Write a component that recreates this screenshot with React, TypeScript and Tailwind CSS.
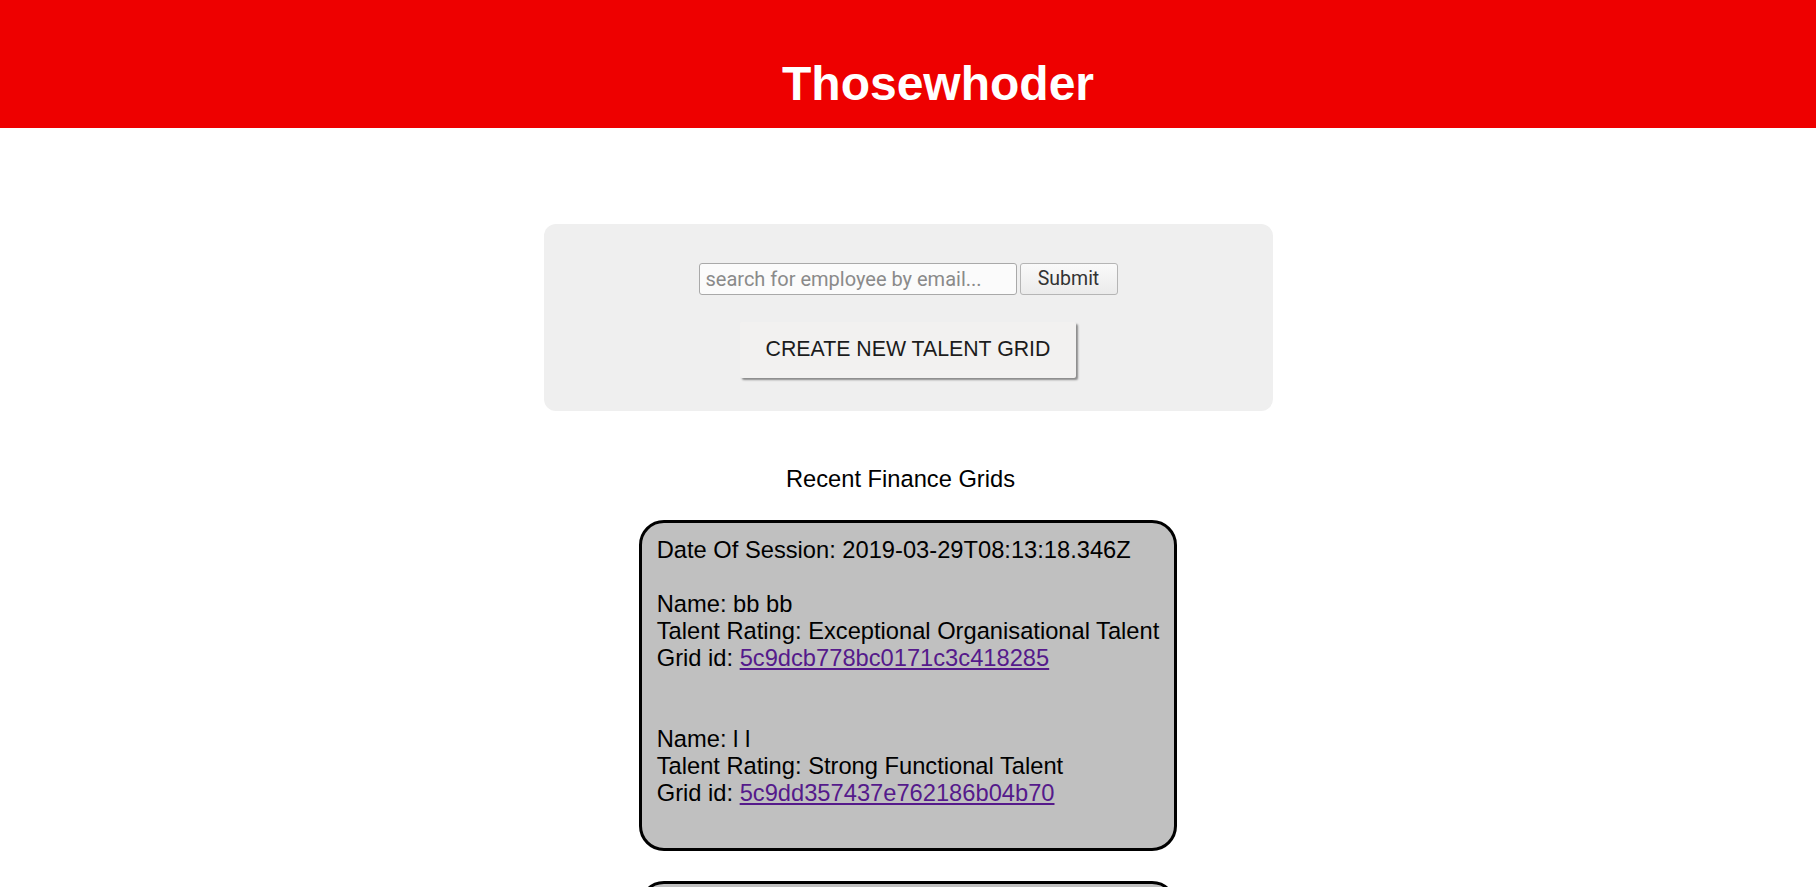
import React from 'react'

type Entry = { name: string; rating: string; gridId: string }

const sessions: { date: string; entries: Entry[] }[] = [
  {
    date: '2019-03-29T08:13:18.346Z',
    entries: [
      { name: 'bb bb', rating: 'Exceptional Organisational Talent', gridId: '5c9dcb778bc0171c3c418285' },
      { name: 'l l', rating: 'Strong Functional Talent', gridId: '5c9dd357437e762186b04b70' },
    ],
  },
  {
    date: '2019-03-28T15:42:07.912Z',
    entries: [
      { name: 'aa aa', rating: 'Exceptional Organisational Talent', gridId: '5c9ce8b1437e762186b04b61' },
    ],
  },
]

function SessionCard({ date, entries }: { date: string; entries: Entry[] }) {
  return (
    <div className="mx-auto w-fit rounded-[25px] border-[3px] border-black bg-[#c0c0c0] px-[15px] py-[14px] text-[23.7px] leading-[27px] text-black">
      <div>Date Of Session: {date}</div>
      <div className="h-[27px]" />
      {entries.map((e, i) => (
        <div key={e.gridId}>
          {i > 0 && <div className="h-[54px]" />}
          <div>Name: {e.name}</div>
          <div>Talent Rating: {e.rating}</div>
          <div>
            Grid id:{' '}
            <a href="#" className="text-[#551a8b] underline">
              {e.gridId}
            </a>
          </div>
        </div>
      ))}
      <div className="h-[27px]" />
    </div>
  )
}

export default function App() {
  return (
    <div className="min-h-screen w-[1816px] bg-white font-['Liberation_Sans',Arial,sans-serif]">
      {/* Header */}
      <header className="h-[128px] bg-[#ee0000] pt-[56px] pl-[60px] text-center">
        <h1 className="text-[48px] font-bold leading-[55px] text-white">Thosewhoder</h1>
      </header>

      {/* Search panel */}
      <section className="mt-[96px] flex justify-center">
        <div className="flex w-[729px] flex-col items-center rounded-[12px] bg-[#efefef] pt-[39px] pb-[33px]">
          <form className="flex items-center gap-[3px] font-['Roboto','Open_Sans',sans-serif]" onSubmit={(e) => e.preventDefault()}>
            <input
              type="text"
              placeholder="search for employee by email..."
              className="h-[32px] w-[318px] rounded-[3px] border border-[#a9a9a9] bg-[#fbfbfb] px-[6px] text-[20px] text-[#333] placeholder:text-[#8a8a8a] outline-none"
            />
            <button
              type="submit"
              className="h-[32px] w-[98px] rounded-[3px] border border-[#b5b5b5] bg-gradient-to-b from-[#fafafa] to-[#ebebeb] text-[19.5px] text-[#333]"
            >
              Submit
            </button>
          </form>
          <button className="mt-[27px] h-[56px] w-[336px] rounded-[2px] bg-[#f2f1f0] text-[21.3px] text-[#1c1c1c] shadow-[2px_2px_2px_#8a8a8a]">
            CREATE NEW TALENT GRID
          </button>
        </div>
      </section>

      {/* Recent grids */}
      <section className="mt-[55px] pb-10">
        <h2 className="pr-[15px] text-center text-[23.7px] leading-[27px] text-black">Recent Finance Grids</h2>
        <div className="mt-[27px] flex flex-col gap-[30px]">
          {sessions.map((s) => (
            <SessionCard key={s.date} date={s.date} entries={s.entries} />
          ))}
        </div>
      </section>
    </div>
  )
}
